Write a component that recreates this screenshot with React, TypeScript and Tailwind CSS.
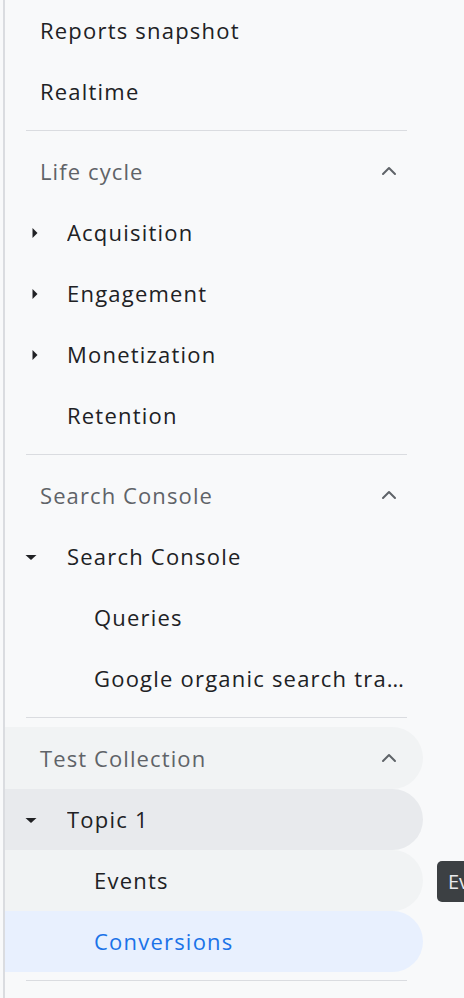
import { ChevronUp } from "lucide-react";

type Row =
  | { kind: "item"; label: string; level: 0 | 1 | 2; arrow?: "right" | "down"; tone?: "hover" | "focus" | "active" }
  | { kind: "header"; label: string; tone?: "hover" }
  | { kind: "divider" };

const rows: Row[] = [
  { kind: "item", label: "Reports snapshot", level: 0 },
  { kind: "item", label: "Realtime", level: 0 },
  { kind: "divider" },
  { kind: "header", label: "Life cycle" },
  { kind: "item", label: "Acquisition", level: 1, arrow: "right" },
  { kind: "item", label: "Engagement", level: 1, arrow: "right" },
  { kind: "item", label: "Monetization", level: 1, arrow: "right" },
  { kind: "item", label: "Retention", level: 1 },
  { kind: "divider" },
  { kind: "header", label: "Search Console" },
  { kind: "item", label: "Search Console", level: 1, arrow: "down" },
  { kind: "item", label: "Queries", level: 2 },
  { kind: "item", label: "Google organic search traffic", level: 2 },
  { kind: "divider" },
  { kind: "header", label: "Test Collection", tone: "hover" },
  { kind: "item", label: "Topic 1", level: 1, arrow: "down", tone: "focus" },
  { kind: "item", label: "Events", level: 2, tone: "hover" },
  { kind: "item", label: "Conversions", level: 2, tone: "active" },
  { kind: "divider" },
];

const indent = { 0: "pl-[35px]", 1: "pl-[62px]", 2: "pl-[89px]" };
const tones = {
  hover: "bg-[#f1f3f4]",
  focus: "bg-[#e8eaed]",
  active: "bg-[#e8f0fe] text-[#1a73e8]",
};

function Arrow({ dir }: { dir: "right" | "down" }) {
  return (
    <svg
      className="absolute left-[19px] top-1/2 -translate-y-1/2"
      width="14"
      height="14"
      viewBox="0 0 14 14"
    >
      {dir === "right" ? (
        <path d="M8.5 2 L13.5 7 L8.5 12 Z" fill="#202124" />
      ) : (
        <path d="M1.5 5 L12.5 5 L7 10 Z" fill="#202124" />
      )}
    </svg>
  );
}

export default function App() {
  return (
    <div
      className="relative h-[998px] w-[464px] overflow-hidden bg-[#f8f9fa] text-[#202124]"
      style={{ fontFamily: '"Open Sans", Roboto, sans-serif' }}
    >
      <div className="flex h-full">
        <div className="ml-[3px] w-[2px] shrink-0 bg-[#dadce0]" />
        <nav className="flex w-[418px] flex-col">
          {rows.map((r, i) => {
            if (r.kind === "divider") {
              return (
                <div key={i} className="pt-[8px] pb-[9px] pl-[21px] pr-[16px]">
                  <div className="h-px bg-[#dadce0]" />
                </div>
              );
            }
            if (r.kind === "header") {
              return (
                <div
                  key={i}
                  className={`flex h-[62px] items-center justify-between rounded-r-full pl-[35px] pr-[22px] text-[22px] tracking-[0.05em] text-[#5f6368] ${
                    r.tone ? tones[r.tone] : ""
                  }`}
                >
                  <span>{r.label}</span>
                  <ChevronUp size={24} strokeWidth={2} className="text-[#5f6368]" />
                </div>
              );
            }
            return (
              <div
                key={i}
                className={`relative flex h-[61px] items-center rounded-r-full pr-[16px] text-[22px] tracking-[0.055em] ${indent[r.level]} ${
                  r.tone ? tones[r.tone] : ""
                }`}
              >
                {r.arrow && <Arrow dir={r.arrow} />}
                <span className="truncate">{r.label}</span>
              </div>
            );
          })}
        </nav>
      </div>
      <div className="absolute left-[437px] top-[861px] flex h-[41px] w-[40px] items-center rounded-[5px] bg-[#3c4043] pl-[11px] text-[20px] text-[#e8eaed]">
        Ev
      </div>
    </div>
  );
}
